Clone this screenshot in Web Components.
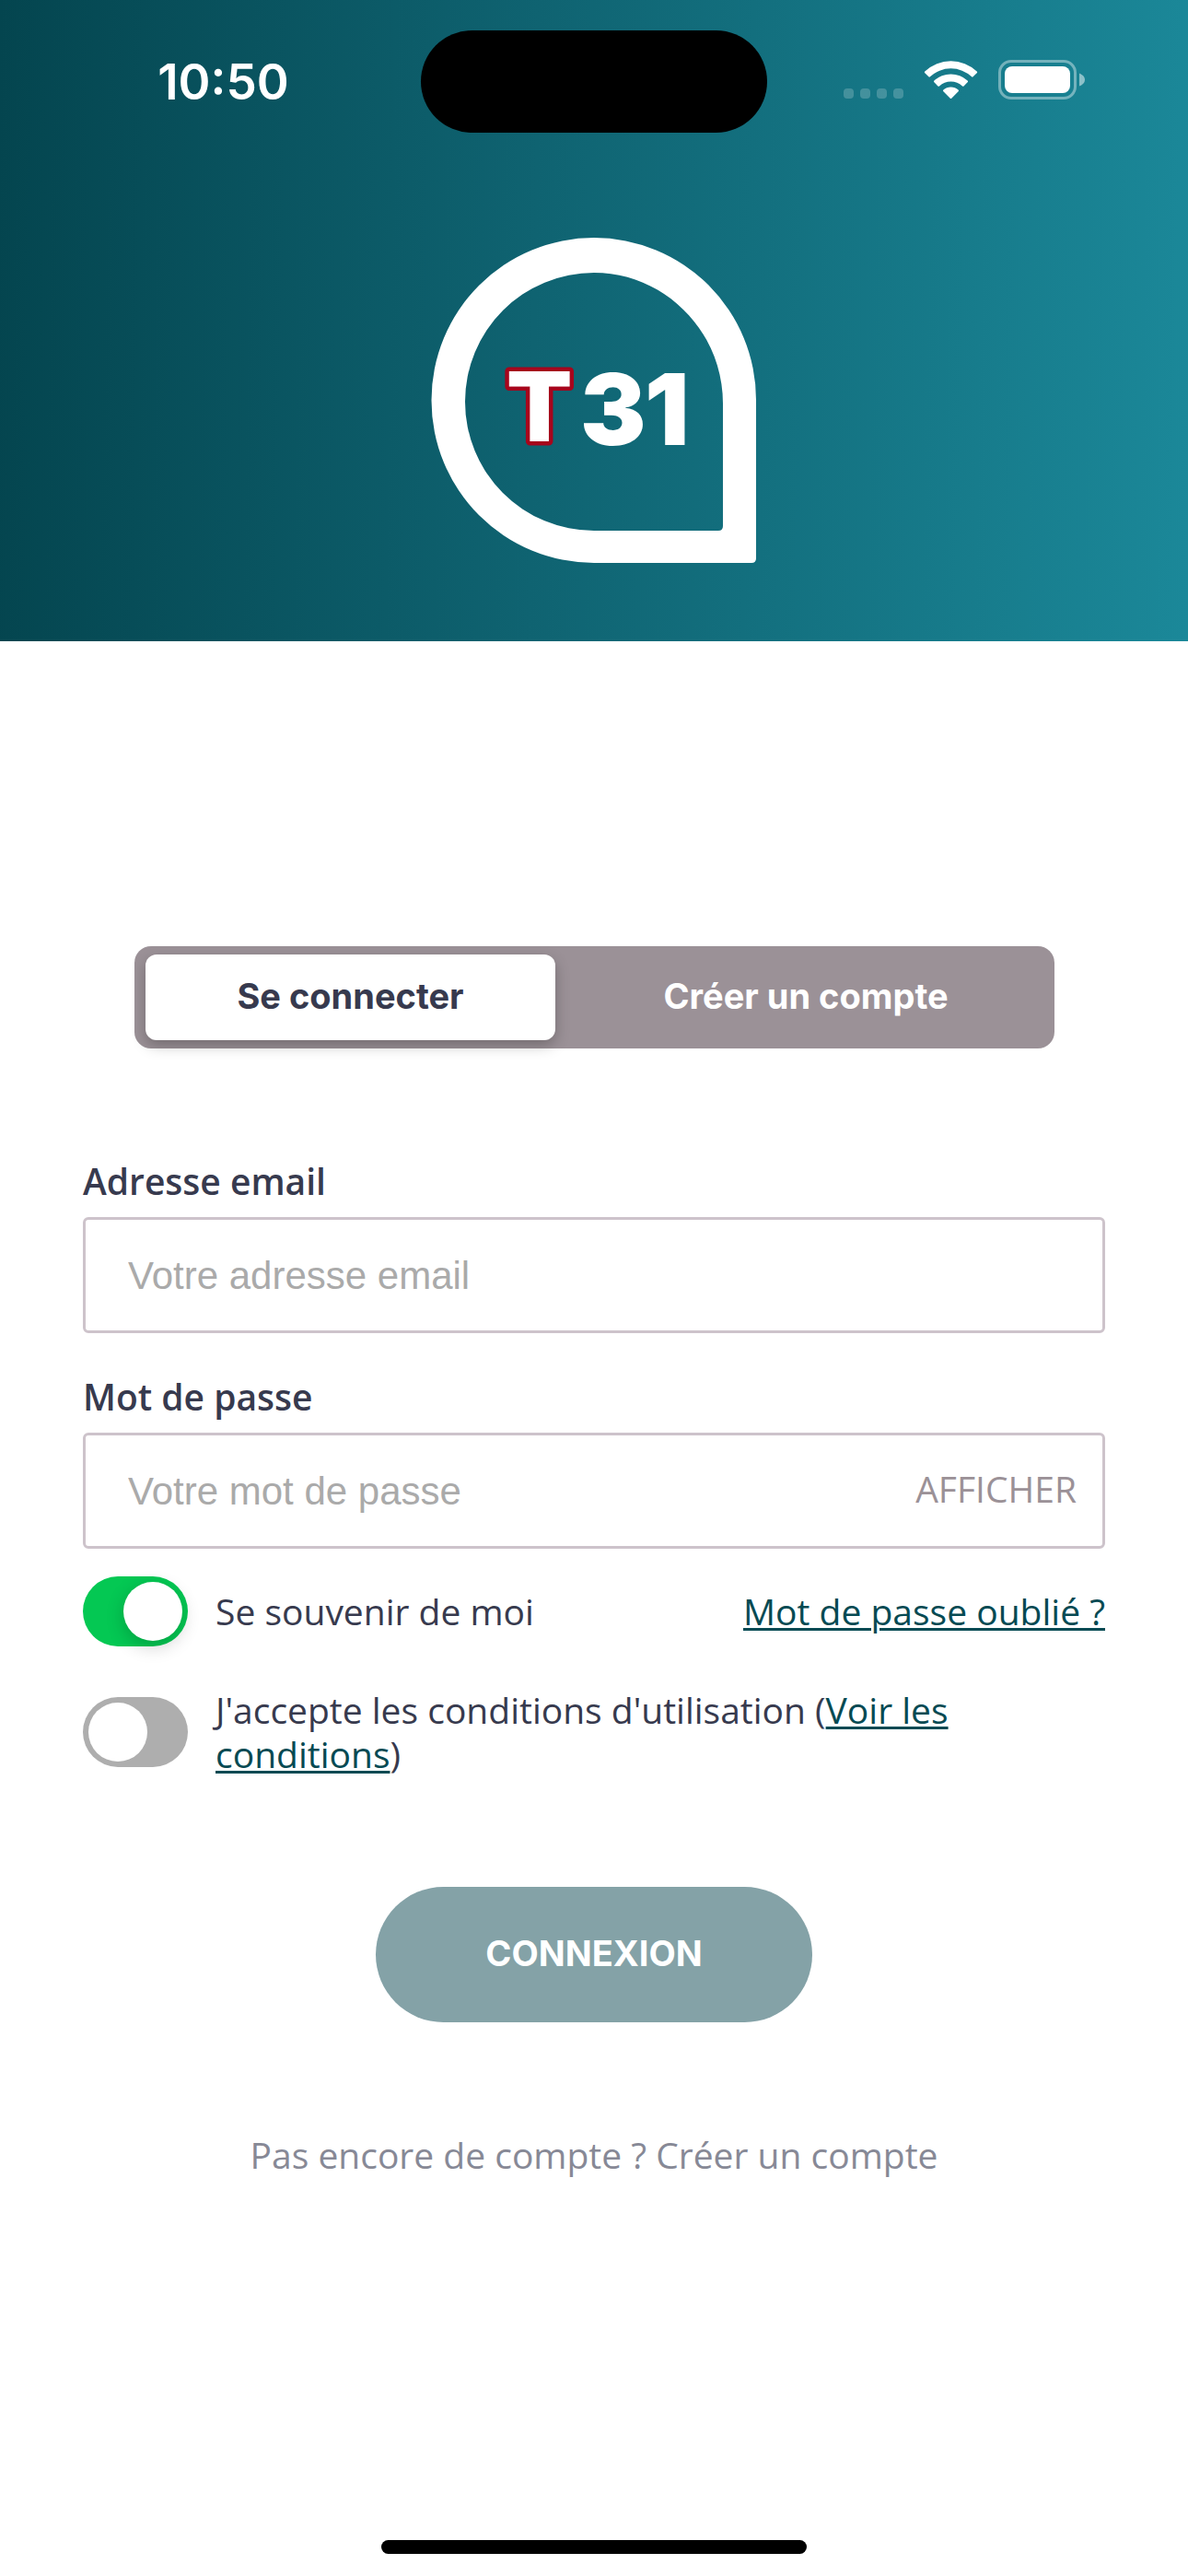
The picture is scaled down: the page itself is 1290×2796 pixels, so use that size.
<!DOCTYPE html>
<html lang="fr">
<head>
<meta charset="utf-8">
<meta name="viewport" content="width=device-width, initial-scale=1">
<title>T31 – Connexion</title>
<style>
  html, body { margin: 0; }
  body {
    --ink: #373a4e;
    --teal: #064a53;
    --mauve: #9b9197;
    --line: #cdc3cb;
    --heading: Inter, "Open Sans", sans-serif;
    background: #fff;
    color: var(--ink);
    font: 39px/48px "Open Sans", sans-serif;
  }
</style>
</head>
<body>
<login-screen></login-screen>
<script>
function define(name, html, setup) {
  const template = document.createElement('template');
  template.innerHTML = html;
  customElements.define(name, class extends HTMLElement {
    constructor() {
      super();
      this.attachShadow({ mode: 'open' }).append(template.content.cloneNode(true));
    }
    connectedCallback() {
      if (setup) setup(this, this.shadowRoot);
    }
  });
}

define('status-bar', `
  <style>
    :host { display: grid; grid-template-columns: 1fr 376px 1fr; height: 111px; padding-top: 33px; }
    time { justify-self: center; padding: 25px 0 0 28px; font: 600 53px/62px Inter, sans-serif; color: #fff; }
    .island { background: #000; border-radius: 56px; }
    .icons { display: flex; padding: 32px 0 0 83px; }
    svg { display: block; width: 263px; height: 43px; }
  </style>
  <time>10:50</time>
  <div class="island"></div>
  <div class="icons">
    <svg viewBox="0 0 263 43" fill="#fff" aria-hidden="true">
      <g opacity=".2">
        <rect x="0" y="31" width="11" height="11" rx="4"/><rect x="18" y="31" width="11" height="11" rx="4"/>
        <rect x="36" y="31" width="11" height="11" rx="4"/><rect x="54" y="31" width="11" height="11" rx="4"/>
      </g>
      <path d="M88.300 12.500 A41 41 0 0 1 144.700 12.500 Q145.600 13.400 144.700 14.300 L140.600 18.300 Q139.900 19 139.100 18.300 A33 33 0 0 0 93.900 18.300 Q93.100 19 92.400 18.300 L88.300 14.300 Q87.400 13.400 88.300 12.500Z"/>
      <path d="M98.400 22.600 A26.500 26.500 0 0 1 134.600 22.600 Q135.500 23.500 134.600 24.300 L130.500 28.400 Q129.800 29 129 28.400 A18.500 18.500 0 0 0 104 28.400 Q103.200 29 102.500 28.400 L98.400 24.300 Q97.500 23.500 98.400 22.600Z"/>
      <path d="M108.400 32.600 A12 12 0 0 1 124.600 32.600 Q125.500 33.500 124.600 34.300 L117.200 41.700 Q116.500 42.400 115.800 41.700 L108.400 34.300 Q107.500 33.500 108.400 32.600Z"/>
      <rect x="169.500" y="1.500" width="82" height="40" rx="12.500" fill="none" stroke="#fff" stroke-width="3" opacity=".4"/>
      <rect x="175" y="7" width="71" height="29" rx="8"/>
      <path opacity=".5" d="M256 14.500 Q262 17 262 21.500 T256 28.500Z"/>
    </svg>
  </div>
`);

define('brand-logo', `
  <style>
    :host { display: block; width: 354px; height: 354px; }
    svg { display: block; width: 100%; height: 100%; overflow: visible; }
    text { font: 900 107px Inter, sans-serif; fill: #fff; }
    .t { font-size: 104px; stroke: #a6051c; stroke-width: 9px; stroke-linejoin: round; paint-order: stroke; }
  </style>
  <svg viewBox="0 0 354 354" role="img" aria-label="T31">
    <path fill="#fff" fill-rule="evenodd" d="M177 1 A176 176 0 0 1 353 177 V349 Q353 354 348 354 H177 A176 176 0 0 1 177 1Z M177 39 A140 140 0 0 0 177 319 H312 Q317 319 317 314 V181 C317 103 254 39 177 39Z"/>
    <text class="t" x="82" y="222">T</text>
    <text x="162" y="226">3</text>
    <text x="232" y="226">1</text>
  </svg>
`);

define('app-header', `
  <style>
    :host {
      display: flex; flex-direction: column; gap: 113px; padding-bottom: 85px;
      background: linear-gradient(91deg, #04454f, #0f6371 45%, #1b8899);
    }
    ::slotted(brand-logo) { align-self: center; }
  </style>
  <status-bar></status-bar>
  <slot></slot>
`);

define('auth-tabs', `
  <style>
    :host {
      display: grid; grid-template-columns: 445fr 516fr; gap: 14px;
      margin: 0 55px 0 56px; padding: 9px 12px; border-radius: 18px; background: var(--mauve);
    }
    button {
      height: 93px; padding: 0 0 4px; border: 0; border-radius: 12px; background: none;
      font: 700 38px/48px var(--heading); color: #fff;
    }
    button[aria-selected="true"] { background: #fff; color: var(--ink); box-shadow: 0 6px 15px rgba(0, 0, 0, .25); }
  </style>
  <button type="button" role="tab" aria-selected="true">Se connecter</button>
  <button type="button" role="tab" aria-selected="false">Créer un compte</button>
`, (host, root) => {
  const tabs = root.querySelectorAll('button');
  tabs.forEach(tab => tab.onclick = () => tabs.forEach(t => t.setAttribute('aria-selected', t === tab)));
});

define('text-field', `
  <style>
    :host { display: flex; flex-direction: column; gap: 12px; }
    label { font-weight: 600; line-height: 54px; }
    .box {
      display: flex; align-items: center; box-sizing: border-box; height: 126px;
      padding: 0 28px 0 46px; border: 3px solid var(--line); border-radius: 6px;
    }
    input {
      flex: 1; min-width: 0; padding: 2px 0 0; border: 0; outline: 0; background: none;
      font: 42px/48px "Liberation Sans", sans-serif; color: var(--ink);
    }
    input::placeholder { color: #aaa; opacity: 1; }
  </style>
  <label for="field"></label>
  <div class="box"><input id="field"><slot></slot></div>
`, (host, root) => {
  const input = root.querySelector('input');
  root.querySelector('label').textContent = host.getAttribute('label');
  input.type = host.getAttribute('type');
  input.placeholder = host.getAttribute('placeholder');
});

define('toggle-row', `
  <style>
    :host { display: flex; align-items: center; gap: 30px; }
    input {
      appearance: none; flex: none; width: 114px; height: 76px; margin: 0; padding: 6px;
      box-sizing: border-box; border-radius: 38px; background: #aeaeae;
    }
    input::before { content: ""; display: block; width: 64px; height: 64px; border-radius: 50%; background: #fff; }
    input:checked { background: #04c853; }
    input:checked::before { margin-left: 38px; box-shadow: 0 6px 20px rgba(0, 0, 0, .2); }
    label { flex: 1; }
  </style>
  <input type="checkbox" id="toggle">
  <label for="toggle"><slot></slot></label>
  <slot name="end"></slot>
`, (host, root) => {
  root.querySelector('input').checked = host.hasAttribute('checked');
});

define('login-form', `
  <style>
    :host { display: block; padding: 331px 90px 0; }
    form { display: flex; flex-direction: column; }
    .fields { display: flex; flex-direction: column; gap: 42px; margin-top: 117px; }
    .options { display: flex; flex-direction: column; gap: 45px; margin-top: 30px; }
    a { color: var(--teal); text-decoration-thickness: 3px; text-underline-offset: 3px; }
    .show { padding: 0 0 4px; border: 0; background: none; font: inherit; color: var(--mauve); }
    .submit {
      align-self: center; width: 474px; height: 147px; margin-top: 120px; padding: 0 0 4px;
      border: 0; border-radius: 74px; background: #84a2a7; color: #fff; font: 700 38px/48px var(--heading);
    }
    p { margin: 117px 0 0; text-align: center; line-height: 54px; color: #878996; }
    p a { color: inherit; text-decoration: none; }
  </style>
  <form>
    <auth-tabs role="tablist"></auth-tabs>
    <div class="fields">
      <text-field label="Adresse email" type="email" placeholder="Votre adresse email"></text-field>
      <text-field label="Mot de passe" type="password" placeholder="Votre mot de passe">
        <button class="show" type="button">AFFICHER</button>
      </text-field>
    </div>
    <div class="options">
      <toggle-row checked>Se souvenir de moi<a slot="end" href="#oubli">Mot de passe oublié ?</a></toggle-row>
      <toggle-row>J'accepte les conditions d'utilisation (<a href="#conditions">Voir les conditions</a>)</toggle-row>
    </div>
    <button class="submit" type="button">CONNEXION</button>
    <p>Pas encore de compte ? <a href="#compte">Créer un compte</a></p>
  </form>
`);

define('home-indicator', `
  <style>
    :host { display: block; width: 462px; height: 15px; border-radius: 8px; background: #000; }
  </style>
`);

define('login-screen', `
  <style>
    :host { display: flex; flex-direction: column; min-height: 100vh; box-sizing: border-box; padding-bottom: 24px; }
    home-indicator { align-self: center; margin-top: auto; }
  </style>
  <app-header><brand-logo></brand-logo></app-header>
  <login-form></login-form>
  <home-indicator></home-indicator>
`);
</script>
</body>
</html>
